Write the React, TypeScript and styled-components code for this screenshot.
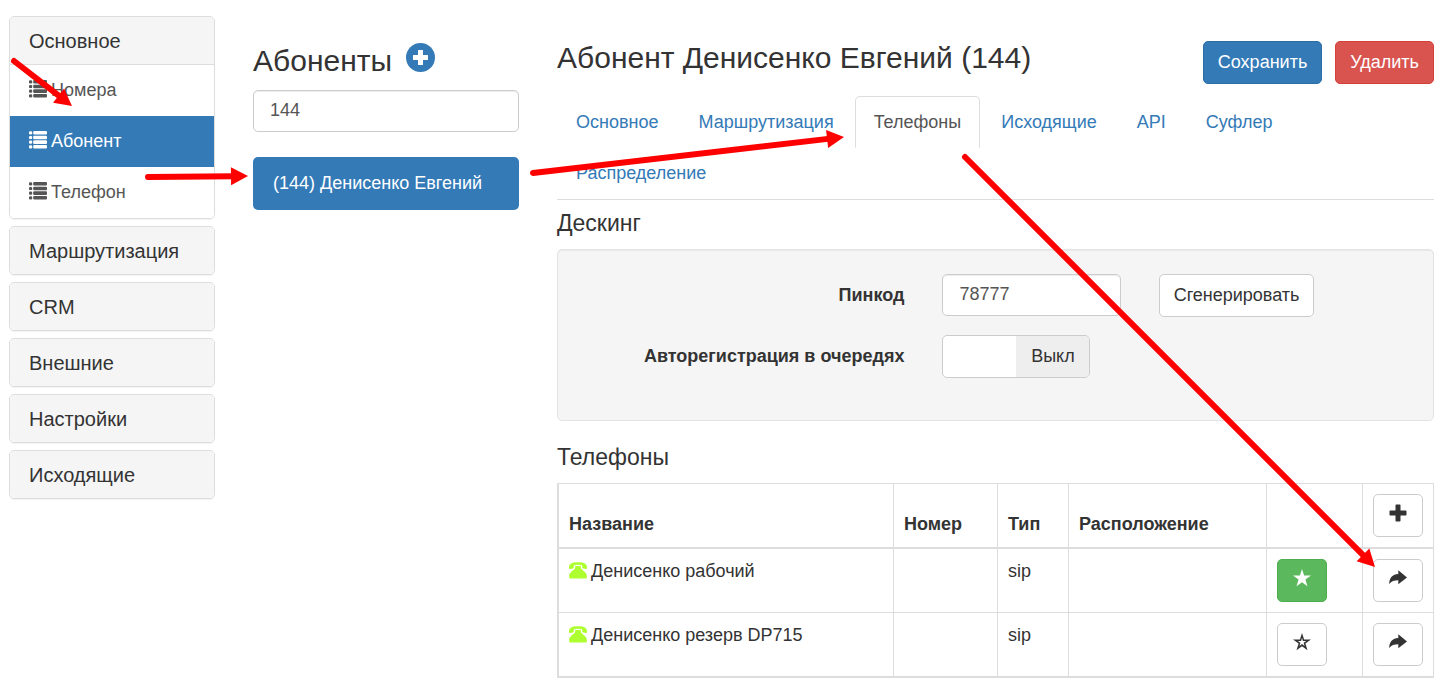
import React, { useState } from "react";
import styled, { createGlobalStyle, css } from "styled-components";

const GlobalStyle = createGlobalStyle`
  *, *::before, *::after { box-sizing: border-box; }
  body {
    margin: 0;
    background: #fff;
    color: #333;
    font: 18px/25px "Liberation Sans", Arial, sans-serif;
  }
  button, input { font: inherit; color: inherit; margin: 0; }
`;

const Page = styled.div`
  position: relative;
  display: grid;
  grid-template-columns: 206fr 266fr 877fr;
  column-gap: 38px;
  align-items: start;
  padding: 16px 7px 4px 9px;
`;

const Sidebar = styled.nav`
  display: flex;
  flex-direction: column;
  gap: 7px;
`;

const Panel = styled.section`
  border: 1px solid #ddd;
  border-radius: 5px;
  overflow: hidden;
  box-shadow: 0 1px 1px rgba(0, 0, 0, 0.05);
`;

const PanelTitle = styled.button`
  display: block;
  width: 100%;
  padding: 12px 19px 11px;
  border: 0;
  background: #f5f5f5;
  font-size: 20px;
  line-height: 24px;
  text-align: left;
  cursor: pointer;
`;

const PanelLink = styled.a<{ $active?: boolean }>`
  display: flex;
  align-items: center;
  gap: 4px;
  padding: 13px 19px;
  text-decoration: none;
  color: ${(p) => (p.$active ? "#fff" : "#555")};
  background: ${(p) => (p.$active ? "#337ab7" : "#fff")};
`;

const PanelBody = styled.div`
  border-top: 1px solid #ddd;
`;

const SubscriberColumn = styled.section`
  padding-top: 27px;
`;

const ColumnHeading = styled.div`
  display: flex;
  align-items: center;
  gap: 14px;
  margin-bottom: 12px;
`;

const Title = styled.h2`
  margin: 0;
  font-size: 30px;
  line-height: 33px;
  font-weight: 400;
`;

const RoundButton = styled.button`
  display: flex;
  padding: 0 0 6px;
  border: 0;
  background: none;
  color: #337ab7;
  cursor: pointer;
`;

const TextInput = styled.input`
  display: block;
  width: 100%;
  height: 42px;
  padding: 6px 16px 8px;
  border: 1px solid #ccc;
  border-radius: 5px;
  background: #fff;
  color: #555;
  box-shadow: inset 0 1px 1px rgba(0, 0, 0, 0.075);
`;

const SubscriberLink = styled.a`
  display: block;
  margin-top: 25px;
  padding: 14px 20px;
  border-radius: 5px;
  background: #337ab7;
  color: #fff;
  text-decoration: none;
`;

const Main = styled.main`
  padding-top: 25px;
`;

const MainHeader = styled.header`
  display: flex;
  align-items: flex-start;
  justify-content: space-between;
`;

const Actions = styled.div`
  display: flex;
  gap: 13px;
`;

const tones = {
  plain: css`background: #fff; border-color: #ccc; color: #333;`,
  primary: css`background: #337ab7; border-color: #2e6da4; color: #fff;`,
  danger: css`background: #d9534f; border-color: #d43f3a; color: #fff;`,
  success: css`background: #5cb85c; border-color: #4cae4c; color: #fff;`,
};

const Button = styled.button<{ $tone?: keyof typeof tones }>`
  display: inline-flex;
  align-items: center;
  justify-content: center;
  height: 43px;
  padding: 0 14px;
  border: 1px solid;
  border-radius: 5px;
  white-space: nowrap;
  cursor: pointer;
  ${(p) => tones[p.$tone ?? "plain"]}
`;

const IconButton = styled(Button)`
  width: 50px;
  padding: 0 0 5px;
  vertical-align: top;
`;

const Tabs = styled.nav`
  display: flex;
  flex-wrap: wrap;
  column-gap: 2px;
  margin-top: 12px;
  padding-bottom: 1px;
  border-bottom: 1px solid #ddd;
`;

const Tab = styled.a<{ $active?: boolean }>`
  margin-bottom: -1px;
  padding: 13px 18px 12px;
  border: 1px solid transparent;
  border-radius: 5px 5px 0 0;
  color: #337ab7;
  text-decoration: none;
  ${(p) => p.$active && css`
    color: #555;
    border-color: #ddd #ddd transparent;
  `}
`;

const SectionTitle = styled.h3`
  margin: 11px 0 13px;
  font-size: 23px;
  line-height: 25px;
  font-weight: 400;
`;

const Well = styled.form`
  display: grid;
  grid-template-columns: 5fr 3fr 4fr;
  row-gap: 18px;
  padding: 24px 5px 42px;
  margin-bottom: 24px;
  border: 1px solid #e3e3e3;
  border-radius: 5px;
  background: #f5f5f5;
  box-shadow: inset 0 1px 1px rgba(0, 0, 0, 0.05);
`;

const FieldLabel = styled.label`
  grid-column: 1;
  padding: 9px 19px;
  font-weight: 700;
  text-align: right;
`;

const FieldCell = styled.div`
  padding: 0 19px;
`;

const Switch = styled.label`
  display: flex;
  width: 148px;
  height: 43px;
  border: 1px solid #ccc;
  border-radius: 5px;
  overflow: hidden;
  background: #fff;
  cursor: pointer;
`;

const SwitchInput = styled.input`
  appearance: none;
  flex: 1;
`;

const SwitchText = styled.span`
  flex: 1;
  padding: 8px 0;
  background: #eee;
  text-align: center;
`;

const Table = styled.table`
  width: 100%;
  table-layout: fixed;
  border-collapse: collapse;
  border: 2px solid #ddd;
  border-top-width: 1px;
  border-right-width: 1px;
`;

const Col = styled.col<{ $width?: number }>`
  ${(p) => p.$width && css`width: ${p.$width}px;`}
`;

const HeadCell = styled.th`
  padding: 10px;
  border: 1px solid #ddd;
  border-bottom-width: 2px;
  text-align: left;
  vertical-align: bottom;
`;

const Cell = styled.td`
  padding: 10px;
  border: 1px solid #ddd;
  vertical-align: top;
`;

const PhoneName = styled.span`
  display: flex;
  align-items: center;
  gap: 4px;
`;

const Icon = styled.svg`
  display: block;
  flex: none;
  fill: currentColor;
`;

const LeadingIcon = styled(Icon)`
  margin-bottom: 3px;
`;

const Annotations = styled.svg`
  position: absolute;
  top: 0;
  left: 0;
  pointer-events: none;
`;

const ListIcon = () => (
  <LeadingIcon width="18" height="18" viewBox="0 0 18 18" aria-hidden="true">
    {[0, 4.7, 9.3, 14].map((y) => (
      <g key={y}>
        <rect x="0" y={y + 0.2} width="3.200" height="3.200" rx="1.200" />
        <rect x="4.200" y={y} width="13.800" height="3.600" rx="1" />
      </g>
    ))}
  </LeadingIcon>
);

const PlusCircleIcon = () => (
  <Icon width="29" height="29" viewBox="0 0 29 29" aria-hidden="true">
    <circle cx="14.5" cy="14.5" r="14.5" />
    <path fill="#fff" d="M12.500 7h4q.5 0 .5.500V12h4.500q.5 0 .5.500v4q0 .5-.5.500H17v4.500q0 .5-.5.500h-4q-.5 0-.5-.5V17H7.500q-.5 0-.5-.5v-4q0-.5.5-.5H12V7.500q0-.5.500-.5z" />
  </Icon>
);

const PhoneIcon = () => (
  <LeadingIcon width="18" height="17" viewBox="0 0 18 17" color="#adff2f" aria-hidden="true">
    <path d="M0 5.800C0 1.800 2.500 .3 9 .3s9 1.500 9 5.500c0 .9-.4 1.300-1.200 1.200l-2.600-.5c-.7-.1-1-.5-1-1.100V3.500C12 2.900 10.500 2.700 9 2.700s-3 .2-4.200.8v1.900c0 .6-.3 1-1 1.100L1.200 7C.4 7.100 0 6.700 0 5.800z" />
    <path d="M6.200 4.100h5.600v1.700c0 2 6 4.200 6 7.800V15.500q0 1-1 1H1.200q-1 0-1-1v-1.900c0-3.600 6-5.800 6-7.800z" />
  </LeadingIcon>
);

const PlusIcon = () => (
  <Icon width="18" height="18" viewBox="0 0 18 18" aria-hidden="true">
    <path d="M7.300.500h3.400q.8 0 .8.800v5.200h5.200q.8 0 .8.800v3.400q0 .8-.8.800h-5.200v5.200q0 .8-.8.800H7.300q-.8 0-.8-.8v-5.200H1.300q-.8 0-.8-.8V7.300q0-.8.8-.8h5.200V1.300q0-.8.800-.8z" />
  </Icon>
);

const ShareIcon = () => (
  <Icon width="18" height="18" viewBox="0 0 18 18" aria-hidden="true">
    <path d="M9.300 1.300 18 8.400l-8.700 6.800v-4C5 11.200 2.500 12.200.2 15 .3 9 3.500 5.200 9.300 5z" />
  </Icon>
);

const starPath = "M9 0l2.100 6.500H18l-5.600 4.100 2.100 6.700L9 13.200l-5.500 4.100 2.100-6.700L0 6.500h6.900z";

const StarIcon = ({ hollow }: { hollow?: boolean }) => (
  <Icon width="18" height="18" viewBox="0 0 18 18" aria-hidden="true">
    <path
      fillRule="evenodd"
      d={starPath + (hollow ? "M9 4.800 8.100 7.900H4.800l2.600 1.900-1 3.100L9 11l2.600 1.900-1-3.100 2.600-1.900H9.900z" : "")}
    />
  </Icon>
);

type Point = [number, number];

const Arrow = ({ from, to }: { from: Point; to: Point }) => {
  const dx = to[0] - from[0];
  const dy = to[1] - from[1];
  const length = Math.hypot(dx, dy);
  const angle = (Math.atan2(dy, dx) * 180) / Math.PI;
  return (
    <g transform={`translate(${from[0]} ${from[1]}) rotate(${angle})`}>
      <line x2={length - 14} stroke="#f00" strokeWidth="6" strokeLinecap="round" />
      <polygon points={`${length},0 ${length - 17},-9 ${length - 17},9`} fill="#f00" />
    </g>
  );
};

const sections = ["Маршрутизация", "CRM", "Внешние", "Настройки", "Исходящие"];
const links = ["Номера", "Абонент", "Телефон"];
const tabs = ["Основное", "Маршрутизация", "Телефоны", "Исходящие", "API", "Суфлер", "Распределение"];
const phones = [
  { name: "Денисенко рабочий", type: "sip", main: true },
  { name: "Денисенко резерв DP715", type: "sip", main: false },
];
const arrows: { from: Point; to: Point }[] = [
  { from: [14, 61], to: [72, 106] },
  { from: [148, 177], to: [248, 176] },
  { from: [533, 173], to: [844, 137] },
  { from: [965, 157], to: [1375, 567] },
];

export default function App() {
  const [filter, setFilter] = useState("144");
  const [pin, setPin] = useState("78777");

  return (
    <Page>
      <GlobalStyle />
      <Sidebar>
        <Panel>
          <PanelTitle>Основное</PanelTitle>
          <PanelBody>
            {links.map((text) => (
              <PanelLink key={text} href="#" $active={text === "Абонент"}>
                <ListIcon />
                {text}
              </PanelLink>
            ))}
          </PanelBody>
        </Panel>
        {sections.map((text) => (
          <Panel key={text}>
            <PanelTitle>{text}</PanelTitle>
          </Panel>
        ))}
      </Sidebar>

      <SubscriberColumn>
        <ColumnHeading>
          <Title>Абоненты</Title>
          <RoundButton aria-label="Добавить абонента">
            <PlusCircleIcon />
          </RoundButton>
        </ColumnHeading>
        <TextInput aria-label="Поиск абонента" value={filter} onChange={(e) => setFilter(e.target.value)} />
        <SubscriberLink href="#">(144) Денисенко Евгений</SubscriberLink>
      </SubscriberColumn>

      <Main>
        <MainHeader>
          <Title as="h1">Абонент Денисенко Евгений (144)</Title>
          <Actions>
            <Button $tone="primary">Сохранить</Button>
            <Button $tone="danger">Удалить</Button>
          </Actions>
        </MainHeader>
        <Tabs>
          {tabs.map((text) => (
            <Tab key={text} href="#" $active={text === "Телефоны"}>
              {text}
            </Tab>
          ))}
        </Tabs>

        <SectionTitle>Дескинг</SectionTitle>
        <Well onSubmit={(e) => e.preventDefault()}>
          <FieldLabel htmlFor="pin">Пинкод</FieldLabel>
          <FieldCell>
            <TextInput id="pin" value={pin} onChange={(e) => setPin(e.target.value)} />
          </FieldCell>
          <FieldCell>
            <Button type="button">Сгенерировать</Button>
          </FieldCell>
          <FieldLabel htmlFor="auto">Авторегистрация в очередях</FieldLabel>
          <FieldCell>
            <Switch>
              <SwitchInput id="auto" type="checkbox" />
              <SwitchText>Выкл</SwitchText>
            </Switch>
          </FieldCell>
        </Well>

        <SectionTitle>Телефоны</SectionTitle>
        <Table>
          <colgroup>
            <Col />
            <Col $width={104} />
            <Col $width={71} />
            <Col $width={198} />
            <Col $width={96} />
            <Col $width={71} />
          </colgroup>
          <thead>
            <tr>
              <HeadCell>Название</HeadCell>
              <HeadCell>Номер</HeadCell>
              <HeadCell>Тип</HeadCell>
              <HeadCell>Расположение</HeadCell>
              <HeadCell />
              <HeadCell>
                <IconButton aria-label="Добавить телефон">
                  <PlusIcon />
                </IconButton>
              </HeadCell>
            </tr>
          </thead>
          <tbody>
            {phones.map((phone) => (
              <tr key={phone.name}>
                <Cell>
                  <PhoneName>
                    <PhoneIcon />
                    {phone.name}
                  </PhoneName>
                </Cell>
                <Cell />
                <Cell>{phone.type}</Cell>
                <Cell />
                <Cell>
                  <IconButton aria-label="Основной телефон" $tone={phone.main ? "success" : "plain"}>
                    <StarIcon hollow={!phone.main} />
                  </IconButton>
                </Cell>
                <Cell>
                  <IconButton aria-label="Открыть телефон">
                    <ShareIcon />
                  </IconButton>
                </Cell>
              </tr>
            ))}
          </tbody>
        </Table>
      </Main>

      <Annotations width="1441" height="682" viewBox="0 0 1441 682" aria-hidden="true">
        {arrows.map((arrow) => (
          <Arrow key={arrow.from[0]} {...arrow} />
        ))}
      </Annotations>
    </Page>
  );
}
